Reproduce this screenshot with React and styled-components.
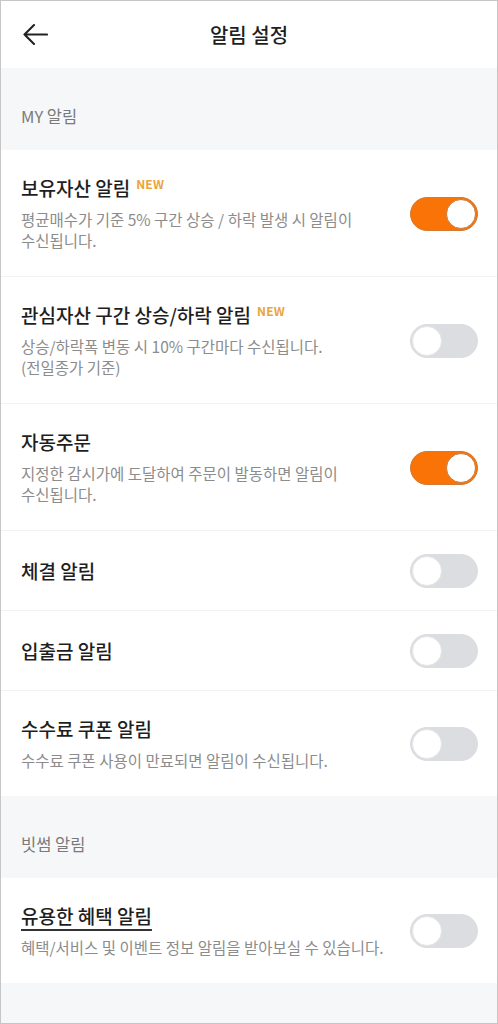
import React, { useState } from "react";
import styled, { createGlobalStyle } from "styled-components";

const GlobalStyle = createGlobalStyle`
  html, body {
    margin: 0;
    padding: 0;
    background: #ffffff;
  }
  * {
    box-sizing: border-box;
  }
  body {
    font-family: "Noto Sans CJK KR", "Noto Sans", sans-serif;
    -webkit-font-smoothing: antialiased;
  }
`;

const MY_ALERTS = [
  {
    id: "holding",
    title: "보유자산 알림",
    isNew: true,
    desc: "평균매수가 기준 5% 구간 상승 / 하락 발생 시 알림이\n수신됩니다.",
    on: true,
  },
  {
    id: "watch",
    title: "관심자산 구간 상승/하락 알림",
    isNew: true,
    desc: "상승/하락폭 변동 시 10% 구간마다 수신됩니다.\n(전일종가 기준)",
    on: false,
  },
  {
    id: "auto",
    title: "자동주문",
    desc: "지정한 감시가에 도달하여 주문이 발동하면 알림이\n수신됩니다.",
    on: true,
  },
  { id: "fill", title: "체결 알림", on: false },
  { id: "deposit", title: "입출금 알림", on: false },
  {
    id: "coupon",
    title: "수수료 쿠폰 알림",
    desc: "수수료 쿠폰 사용이 만료되면 알림이 수신됩니다.",
    on: false,
  },
];

const BITHUMB_ALERTS = [
  {
    id: "benefit",
    title: "유용한 혜택 알림",
    underline: true,
    desc: "혜택/서비스 및 이벤트 정보 알림을 받아보실 수 있습니다.",
    on: false,
  },
];

const BackIcon = () => (
  <svg width="26" height="23" viewBox="0 0 26 23" fill="none">
    <path
      d="M25 11.5H2.5M12 2L2.5 11.5L12 21"
      stroke="#222"
      strokeWidth="2.1"
      strokeLinecap="round"
      strokeLinejoin="round"
    />
  </svg>
);

const Toggle = ({ on, onClick }) => (
  <Track $on={on} onClick={onClick}>
    <Knob $on={on} />
  </Track>
);

const AlertRow = ({ item, onToggle }) => (
  <Row>
    <TextBlock>
      <TitleLine>
        <Title $underline={item.underline}>{item.title}</Title>
        {item.isNew && <NewBadge>NEW</NewBadge>}
      </TitleLine>
      {item.desc && <Desc>{item.desc}</Desc>}
    </TextBlock>
    <Toggle on={item.on} onClick={() => onToggle(item.id)} />
  </Row>
);

export default function App() {
  const [state, setState] = useState(() => {
    const s = {};
    [...MY_ALERTS, ...BITHUMB_ALERTS].forEach((a) => (s[a.id] = a.on));
    return s;
  });

  const toggle = (id) => setState((s) => ({ ...s, [id]: !s[id] }));
  const withState = (list) => list.map((a) => ({ ...a, on: state[a.id] }));

  return (
    <Page>
      <GlobalStyle />
      <Header>
        <BackButton aria-label="뒤로">
          <BackIcon />
        </BackButton>
        <HeaderTitle>알림 설정</HeaderTitle>
        <span />
      </Header>

      <SectionLabel>MY 알림</SectionLabel>
      <Group>
        {withState(MY_ALERTS).map((item) => (
          <AlertRow key={item.id} item={item} onToggle={toggle} />
        ))}
      </Group>

      <SectionLabel>빗썸 알림</SectionLabel>
      <Group>
        {withState(BITHUMB_ALERTS).map((item) => (
          <AlertRow key={item.id} item={item} onToggle={toggle} />
        ))}
      </Group>
    </Page>
  );
}

const Page = styled.div`
  width: 498px;
  min-height: 1024px;
  border: 1px solid #c6c6c6;
  background: #f6f7f9;
  display: flex;
  flex-direction: column;
`;

const Header = styled.header`
  height: 67px;
  background: #ffffff;
  display: grid;
  grid-template-columns: 1fr auto 1fr;
  align-items: center;
`;

const BackButton = styled.button`
  justify-self: start;
  margin-left: 21px;
  padding: 0;
  border: 0;
  background: none;
  display: flex;
  cursor: pointer;
`;

const HeaderTitle = styled.h1`
  margin: 0;
  font-size: 20px;
  line-height: 26px;
  font-weight: 500;
  color: #1f1f1f;
`;

const SectionLabel = styled.div`
  height: 82px;
  padding: 38px 20px 0;
  font-size: 16.5px;
  line-height: 21px;
  color: #7a7a7a;
`;

const Group = styled.section`
  background: #ffffff;
`;

const Row = styled.div`
  display: flex;
  align-items: center;
  justify-content: space-between;
  gap: 12px;
  min-height: 79px;
  padding: 23px 19px 22px 20px;
  & + & {
    border-top: 1px solid #f1f2f4;
  }
`;

const TextBlock = styled.div`
  flex: 1;
  min-width: 0;
  padding: 3px 0;
`;

const TitleLine = styled.div`
  display: flex;
  align-items: flex-start;
  gap: 6px;
`;

const Title = styled.span`
  font-size: 19px;
  line-height: 24px;
  font-weight: 500;
  color: #1e1e1e;
  text-decoration: ${(p) => (p.$underline ? "underline" : "none")};
  text-decoration-thickness: 1.5px;
  text-underline-offset: 5px;
  text-decoration-color: #333;
`;

const NewBadge = styled.span`
  font-size: 12px;
  line-height: 12px;
  margin-top: 2px;
  font-weight: 700;
  color: #eba33c;
  letter-spacing: 0.2px;
`;

const Desc = styled.p`
  margin: 9px 0 0;
  font-size: 15.5px;
  line-height: 21px;
  color: #8c8c8c;
  white-space: pre;
`;

const Track = styled.div`
  flex: none;
  position: relative;
  width: 68px;
  height: 34px;
  border-radius: 17px;
  background: ${(p) => (p.$on ? "#f97307" : "#dcdde1")};
  border: 1px solid ${(p) => (p.$on ? "#d47a32" : "#dcdde1")};
  cursor: pointer;
`;

const Knob = styled.div`
  position: absolute;
  top: 1px;
  left: ${(p) => (p.$on ? "35px" : "1px")};
  width: 30px;
  height: 30px;
  border-radius: 50%;
  background: #ffffff;
  border: 1.5px solid ${(p) => (p.$on ? "#c9793a" : "#e6e6e8")};
`;
